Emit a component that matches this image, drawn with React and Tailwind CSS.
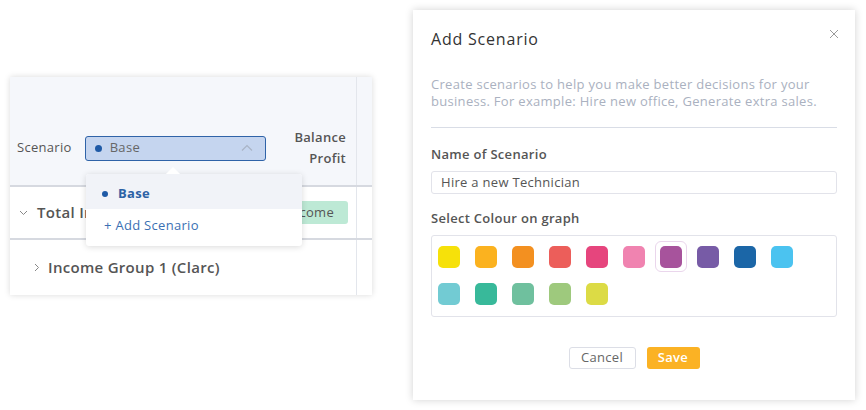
import React from "react";

const swatches1 = ["#f6e10a", "#fbb21f", "#f39020", "#ec5e5a", "#e6457d", "#f083b0", "#a7539c", "#775ba6", "#1b66a7", "#4bc3f0"];
const swatches2 = ["#72cbd3", "#38b99a", "#6fc09e", "#9ec97d", "#dcdb45"];

function Swatch({ c, selected }) {
  if (selected) {
    return (
      <div className="w-[32px] h-[31px] -m-[5px] rounded-[6px] border border-[#ead6ec] flex items-center justify-center">
        <div className="w-[22px] h-[22px] rounded-[5px]" style={{ backgroundColor: c }} />
      </div>
    );
  }
  return <div className="w-[22px] h-[22px] rounded-[5px]" style={{ backgroundColor: c }} />;
}

export default function App() {
  return (
    <div className="w-[866px] h-[410px] bg-white flex items-start font-['Open_Sans',sans-serif] text-[#555] tracking-[0.3px]">
      {/* Left table card */}
      <div className="relative mt-[77px] ml-[10px] w-[362px] h-[218px] bg-white shadow-[0_0_6px_rgba(0,0,0,0.15)] flex flex-col">
        <div className="flex h-[110px] bg-[#f5f7fb] border-b-2 border-[#d6d9e0]">
          <div className="w-[347px] border-r border-[#e3e6ec] flex items-end pb-[22px] pl-[7px] pr-[10px]">
            <div className="flex items-center h-[30px]">
              <span className="text-[13px] font-medium text-[#555]">Scenario</span>
              <div className="ml-[13px] w-[181px] h-[25px] bg-[#c5d5ef] border border-[#2f63a8] rounded-[3px] flex items-center pl-[9px] pr-[12px]">
                <span className="w-[7px] h-[7px] rounded-full bg-[#1f5aa6]" />
                <span className="ml-[8px] text-[13px] text-[#666]">Base</span>
                <svg className="ml-auto" width="12" height="8" viewBox="0 0 12 8" fill="none">
                  <path d="M1 6.5 L6 1.5 L11 6.5" stroke="#a9b4c6" strokeWidth="1.2" />
                </svg>
              </div>
            </div>
            <div className="ml-auto text-right text-[13px] font-semibold leading-[21px] text-[#555] mb-[-6px]">
              <div>Balance</div>
              <div>Profit</div>
            </div>
          </div>
          <div className="flex-1" />
        </div>
        <div className="flex h-[53px] border-b-2 border-[#d6d9e0]">
          <div className="w-[347px] border-r border-[#e3e6ec] flex items-center pl-[9px] pr-[8px]">
            <svg width="9" height="6" viewBox="0 0 9 6" fill="none">
              <path d="M1 1 L4.5 4.5 L8 1" stroke="#888" strokeWidth="1" />
            </svg>
            <span className="ml-[9px] text-[15px] font-semibold text-[#555]">Total In</span>
            <span className="ml-auto h-[23px] bg-[#bde9d5] rounded-[3px] flex items-center px-[14px] text-[13px] text-[#555]">Income</span>
          </div>
          <div className="flex-1" />
        </div>
        <div className="flex flex-1">
          <div className="w-[347px] border-r border-[#e3e6ec] flex items-center pl-[24px]">
            <svg width="6" height="9" viewBox="0 0 6 9" fill="none">
              <path d="M1 1 L4.5 4.5 L1 8" stroke="#888" strokeWidth="1" />
            </svg>
            <span className="ml-[8px] text-[15px] font-semibold text-[#555]">Income Group 1 (Clarc)</span>
          </div>
          <div className="flex-1" />
        </div>

        {/* Dropdown */}
        <div className="absolute left-[76px] top-[97px] w-[216px] bg-white rounded-[3px] shadow-[0_1px_6px_rgba(0,0,0,0.15)] flex flex-col">
          <div className="absolute -top-[5px] left-[82px] w-[10px] h-[10px] bg-white rotate-45" />
          <div className="relative h-[35px] bg-[#f1f3f8] flex items-center pl-[16px] pt-[4px] rounded-t-[3px]">
            <span className="w-[6px] h-[6px] rounded-full bg-[#1f5aa6]" />
            <span className="ml-[10px] text-[13px] font-bold text-[#2c62a5]">Base</span>
          </div>
          <div className="h-[37px] flex items-center pl-[18px] pb-[4px] text-[13px] text-[#3a70b3]">+ Add Scenario</div>
        </div>
      </div>

      {/* Modal */}
      <div className="ml-[41px] mt-[10px] w-[442px] h-[390px] bg-white shadow-[0_0_8px_rgba(0,0,0,0.18)] flex flex-col px-[18px] relative">
        <button className="absolute right-[16px] top-[19px] flex">
          <svg width="10" height="10" viewBox="0 0 10 10" fill="none">
            <path d="M1 1 L9 9 M9 1 L1 9" stroke="#9a9a9a" strokeWidth="1" />
          </svg>
        </button>
        <div className="mt-[17px] text-[16px] text-[#333] leading-[24px] tracking-[0.8px]">Add Scenario</div>
        <div className="mt-[25px] text-[13px] leading-[17px] text-[#aab1c0]">
          Create scenarios to help you make better decisions for your business. For example: Hire new office, Generate extra sales.
        </div>
        <div className="mt-[17px] h-px bg-[#d9dde6]" />
        <div className="mt-[17px] text-[13px] font-semibold text-[#555] leading-[18px]">Name of Scenario</div>
        <div className="mt-[8px] h-[23px] border border-[#e2e3ea] rounded-[3px] flex items-center pl-[9px] text-[13px] text-[#555]">Hire a new Technician</div>
        <div className="mt-[15px] text-[13px] font-semibold text-[#555] leading-[18px]">Select Colour on graph</div>
        <div className="mt-[8px] h-[82px] border border-[#e2e3ea] rounded-[3px] flex flex-col gap-[15px] pl-[6px] pt-[10px]">
          <div className="flex gap-[15px]">
            {swatches1.map((c, i) => (
              <Swatch key={i} c={c} selected={i === 6} />
            ))}
          </div>
          <div className="flex gap-[15px]">
            {swatches2.map((c, i) => (
              <Swatch key={i} c={c} />
            ))}
          </div>
        </div>
        <div className="mt-[30px] flex justify-center gap-[11px]">
          <button className="w-[67px] h-[22px] border border-[#dcdee6] rounded-[3px] text-[13px] text-[#666] bg-white">Cancel</button>
          <button className="w-[53px] h-[22px] rounded-[3px] text-[13px] font-semibold text-white bg-[#fbb224]">Save</button>
        </div>
      </div>
    </div>
  );
}
